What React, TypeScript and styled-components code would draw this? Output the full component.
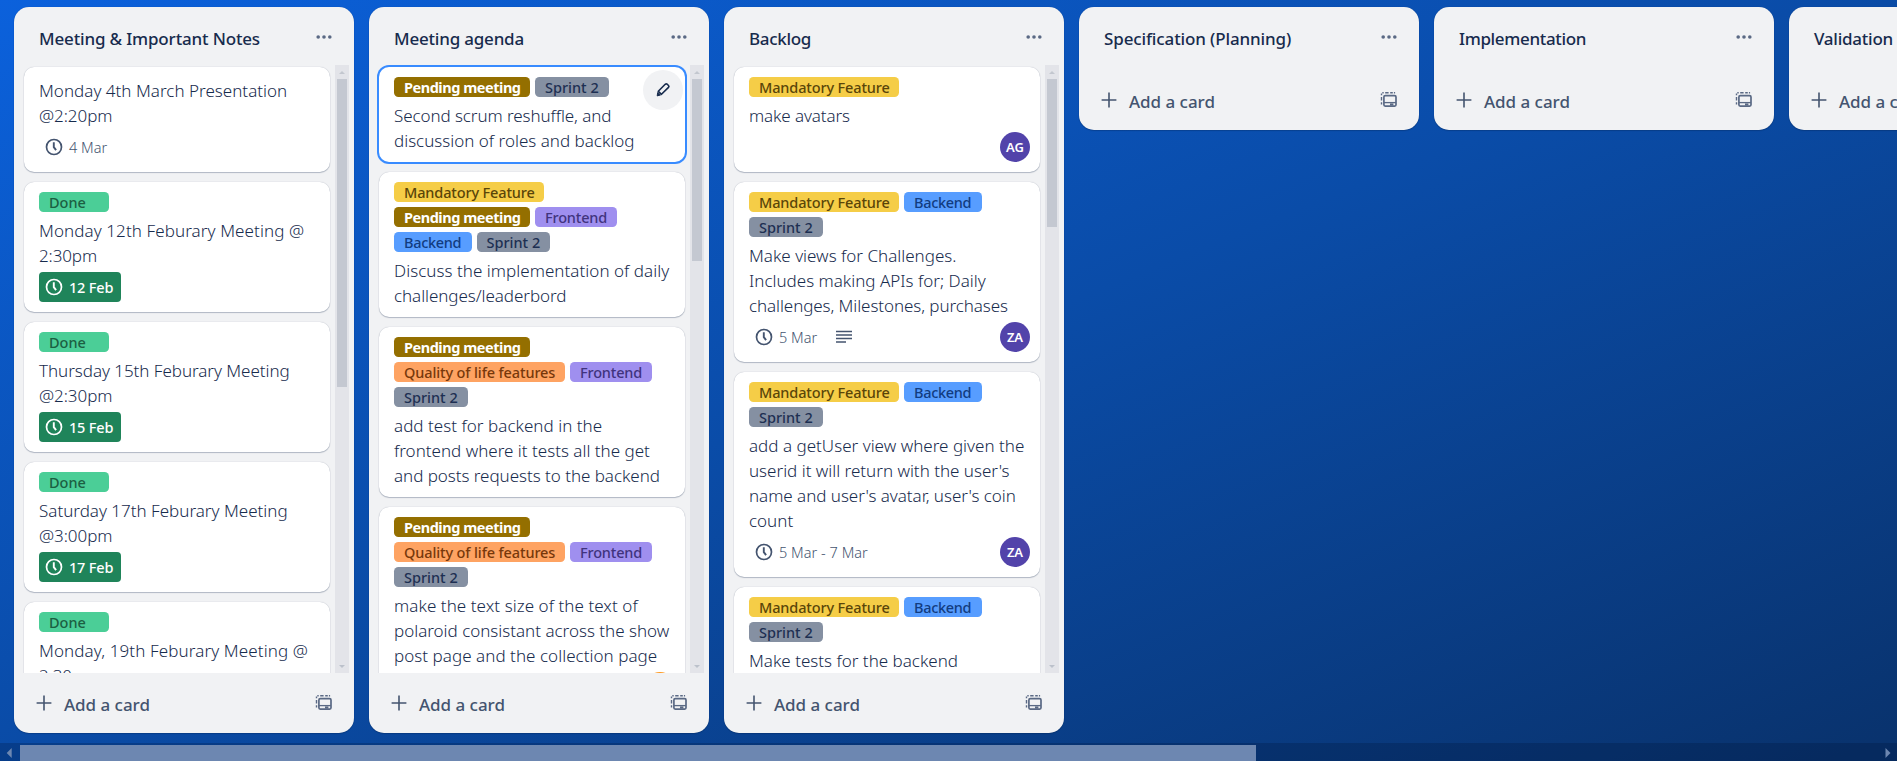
import React from "react";
import styled, { createGlobalStyle, css } from "styled-components";

const GlobalStyle = createGlobalStyle`
  *, *::before, *::after { box-sizing: border-box; }
  body {
    margin: 0;
    overflow: hidden;
    font-family: "Noto Sans", "Open Sans", sans-serif;
    color: #172b4d;
  }
`;

/* ---------- board ---------- */

const Page = styled.div`
  display: flex;
  flex-direction: column;
  height: 761px;
  background: linear-gradient(to bottom right, #0b61dc 0%, #0a4ca8 48%, #09326c 100%);
`;

const Lists = styled.main`
  flex: 1;
  min-height: 0;
  display: flex;
  align-items: flex-start;
  gap: 15px;
  padding: 7px 0 10px 14px;
  overflow: hidden;
`;

const List = styled.section<{ $full: boolean }>`
  flex: 0 0 340px;
  display: flex;
  flex-direction: column;
  height: ${(p) => (p.$full ? "726px" : "123px")};
  border-radius: 15px;
  background: #f1f2f4;
  box-shadow: 0 1px 1px #091e4240, 0 0 1px #091e424f;
`;

const ListHeader = styled.header`
  flex: 0 0 58px;
  display: flex;
  justify-content: space-between;
  padding: 19px 22px 0 25px;
`;

const ListTitle = styled.h2<{ $track: number }>`
  margin: 0;
  font-size: 17px;
  line-height: 25px;
  font-weight: 500;
  letter-spacing: ${(p) => p.$track}px;
  white-space: nowrap;
`;

const HeaderIcon = styled.span`
  height: 20px;
  padding-top: 1px;
  color: #5a6984;
`;

const ListBody = styled.div`
  flex: 1;
  min-height: 0;
  display: flex;
  justify-content: space-between;
  padding: 0 5px 0 8px;
`;

const Cards = styled.div`
  width: 311px;
  height: 100%;
  padding: 2px 3px 0 2px;
  display: flex;
  flex-direction: column;
  gap: 10px;
  overflow: hidden;
`;

const ListFooter = styled.footer<{ $short: boolean }>`
  flex: none;
  display: flex;
  align-items: center;
  height: ${(p) => (p.$short ? 65 : 60)}px;
  padding: ${(p) => (p.$short ? "5px 21px 0 22px" : "0 21px 0 22px")};
  color: #44546f;
`;

const AddLabel = styled.span`
  flex: 1;
  margin-left: 12px;
  padding-top: 2px;
  font-size: 17px;
  line-height: 25px;
  font-weight: 500;
  letter-spacing: -0.03px;
`;

/* ---------- cards ---------- */

const Card = styled.article<{ $focused?: boolean }>`
  position: relative;
  flex: none;
  padding: 10px 10px 5px 15px;
  border-radius: 10px;
  background: #fff;
  box-shadow: 0 1px 1px #091e4240, 0 0 1px #091e424f;
  ${(p) =>
    p.$focused &&
    css`
      box-shadow: 0 0 0 2px #388bff;
    `}
`;

const Labels = styled.div`
  display: flex;
  flex-wrap: wrap;
  gap: 5px;
  padding-bottom: 5px;
`;

type LabelKind = "done" | "pending" | "sprint" | "mandatory" | "frontend" | "backend" | "quality";

const labelSpec: Record<
  LabelKind,
  { text: string; bg: string; fg: string; width: number; track: number; weight: number }
> = {
  done: { text: "Done", bg: "#4bce97", fg: "#1c5f42", width: 70, track: -0.04, weight: 500 },
  pending: { text: "Pending meeting", bg: "#946f00", fg: "#ffffff", width: 136, track: -0.47, weight: 700 },
  sprint: { text: "Sprint 2", bg: "#8590a2", fg: "#1d2f52", width: 73.5, track: 0, weight: 500 },
  mandatory: { text: "Mandatory Feature", bg: "#f5cd47", fg: "#5a4509", width: 150, track: -0.14, weight: 500 },
  frontend: { text: "Frontend", bg: "#9f8fef", fg: "#41337d", width: 82, track: -0.17, weight: 500 },
  backend: { text: "Backend", bg: "#579dff", fg: "#123c80", width: 77.5, track: -0.32, weight: 500 },
  quality: { text: "Quality of life features", bg: "#fea362", fg: "#77380b", width: 171, track: -0.12, weight: 500 },
};

const Label = styled.span<{ $kind: LabelKind }>`
  width: ${(p) => labelSpec[p.$kind].width}px;
  height: 20px;
  padding-left: 10px;
  border-radius: 4.5px;
  background: ${(p) => labelSpec[p.$kind].bg};
  color: ${(p) => labelSpec[p.$kind].fg};
  font-size: 14.5px;
  line-height: 20px;
  font-weight: ${(p) => labelSpec[p.$kind].weight};
  letter-spacing: ${(p) => labelSpec[p.$kind].track}px;
  white-space: nowrap;
`;

const CardTitle = styled.div`
  padding-top: 1px;
  margin-bottom: 4px;
  font-size: 17px;
  line-height: 25px;
  font-weight: 350;
`;

const TitleLine = styled.div<{ $track: number }>`
  white-space: nowrap;
  letter-spacing: ${(p) => p.$track}px;
`;

const CardMeta = styled.div`
  display: flex;
  align-items: center;
  height: 30px;
  margin-bottom: 5px;
`;

const DateBadge = styled.span<{ $done?: boolean }>`
  display: flex;
  align-items: center;
  gap: 5px;
  height: 30px;
  padding: 0 7.5px 0 5px;
  border-radius: 4px;
  font-size: 14.5px;
  line-height: 28px;
  white-space: nowrap;
  font-weight: ${(p) => (p.$done ? 500 : 350)};
  letter-spacing: ${(p) => (p.$done ? -0.17 : 0.02)}px;
  color: ${(p) => (p.$done ? "#ffffff" : "#44546f")};
  background: ${(p) => (p.$done ? "#1f845a" : "transparent")};
`;

const DescriptionBadge = styled.span`
  display: flex;
  margin-left: 11px;
  color: #44546f;
`;

const Avatar = styled.span<{ $color: string }>`
  display: grid;
  place-items: center;
  width: 30px;
  height: 30px;
  margin-left: auto;
  border-radius: 50%;
  background: ${(p) => p.$color};
  color: #fff;
  font-size: 13px;
  line-height: 30px;
  font-weight: 600;
`;

const EditButton = styled.button`
  position: absolute;
  top: 3px;
  right: 2px;
  display: grid;
  place-items: center;
  width: 40px;
  height: 40px;
  padding: 0;
  border: 0;
  border-radius: 50%;
  background: #f1f2f4;
  color: #172b4d;
`;

/* ---------- scrollbars ---------- */

const VTrack = styled.div`
  display: flex;
  flex-direction: column;
  align-items: center;
  width: 14px;
  height: 608px;
  background: #e3e4e9;
`;

const VThumb = styled.div<{ $height: number }>`
  width: 10px;
  height: ${(p) => p.$height}px;
  background: #c4c8d1;
`;

const VArrow = styled.div<{ $end?: boolean }>`
  display: grid;
  place-items: center;
  height: 14px;
  margin-top: ${(p) => (p.$end ? "auto" : "0")};
`;

const HTrack = styled.div`
  flex: 0 0 18px;
  display: flex;
  align-items: center;
  padding: 2px 6px 0;
  background: rgba(2, 18, 50, 0.24);
`;

const HThumb = styled.div`
  width: 1236px;
  height: 16px;
  margin: 0 auto 0 8px;
  background: #6d87b1;
`;

/* ---------- icons ---------- */

const DotsIcon = () => (
  <svg width="16" height="20" viewBox="0 0 16 20" fill="currentColor">
    <circle cx="2.2" cy="10" r="1.8" />
    <circle cx="8" cy="10" r="1.8" />
    <circle cx="13.8" cy="10" r="1.8" />
  </svg>
);

const PlusIcon = () => (
  <svg width="16" height="16" viewBox="0 0 16 16" stroke="currentColor" strokeWidth="1.6" fill="none">
    <path d="M8 .6v14.8M.6 8h14.8" />
  </svg>
);

const TemplateIcon = () => (
  <svg width="18" height="18" viewBox="0 0 18 18" fill="none" stroke="#5a6984" strokeWidth="1.7">
    <rect x="3.9" y="4.7" width="12.1" height="10.4" rx="1.3" />
    <path d="M4 11.6h12" strokeWidth="1.3" />
    <path d="M10 13.5h3.4" strokeWidth="2.2" />
    <path d="M2.3 1.8h1.4M5.2 1.8h3.4M10.2 1.8h2.6M13.9 1.8h1.2" strokeWidth="1.6" />
    <path d="M1.5 2.5v1.8M1.5 6v3.4M1.5 11.2v2.4" strokeWidth="1.4" />
  </svg>
);

const ClockIcon = () => (
  <svg width="20" height="20" viewBox="0 0 20 20" fill="none" stroke="currentColor" strokeWidth="1.7">
    <circle cx="10" cy="10" r="7.5" />
    <path d="M9.8 5.2v5l2.3 3" strokeWidth="1.9" />
  </svg>
);

const DescriptionIcon = () => (
  <svg width="16" height="14" viewBox="0 0 16 14" stroke="currentColor" strokeWidth="1.7">
    <path d="M0 1.5h16M0 5h16M0 8.5h16M0 12h10" />
  </svg>
);

const PencilIcon = () => (
  <svg width="20" height="20" viewBox="0 0 20 20" fill="none" stroke="currentColor" strokeWidth="1.6" strokeLinejoin="round">
    <path d="M5.3 11.3l6.9-7q1-.9 2-.1l1.3 1.3q.9 1 0 1.9l-7 6.9z" />
    <path d="M4.7 12.4l2.7 2.6-3.2.9z" fill="currentColor" strokeWidth="1" />
  </svg>
);

const VerticalArrow = ({ down }: { down?: boolean }) => (
  <svg width="6" height="3" viewBox="0 0 6 3" fill={down ? "#bcc1cb" : "#c3c7cf"}>
    <path d={down ? "M0 0h6L3 3z" : "M0 3h6L3 0z"} />
  </svg>
);

const HorizontalArrow = ({ right }: { right?: boolean }) => (
  <svg width="6" height="10" viewBox="0 0 6 10" fill="#6d87b1">
    <path d={right ? "M.5 0v10L5.5 5z" : "M5.7 0v10L.7 5z"} />
  </svg>
);

/* ---------- data ---------- */

type Line = [text: string, track: number];

interface CardData {
  labels?: LabelKind[];
  lines: Line[];
  date?: string;
  done?: boolean;
  description?: boolean;
  member?: string;
  memberColor?: string;
  focused?: boolean;
}

interface ListData {
  title: string;
  track: number;
  thumb?: number;
  cards?: CardData[];
}

const board: ListData[] = [
  {
    title: "Meeting & Important Notes",
    track: -0.16,
    thumb: 308,
    cards: [
      { lines: [["Monday 4th March Presentation", 0.02], ["@2:20pm", -0.05]], date: "4 Mar" },
      { labels: ["done"], lines: [["Monday 12th Feburary Meeting @", 0.09], ["2:30pm", -0.11]], date: "12 Feb", done: true },
      { labels: ["done"], lines: [["Thursday 15th Feburary Meeting", -0.04], ["@2:30pm", -0.05]], date: "15 Feb", done: true },
      { labels: ["done"], lines: [["Saturday 17th Feburary Meeting", 0], ["@3:00pm", -0.05]], date: "17 Feb", done: true },
      { labels: ["done"], lines: [["Monday, 19th Feburary Meeting @", 0.11], ["2:30", -0.1]] },
    ],
  },
  {
    title: "Meeting agenda",
    track: -0.2,
    thumb: 182,
    cards: [
      {
        labels: ["pending", "sprint"],
        lines: [["Second scrum reshuffle, and", -0.08], ["discussion of roles and backlog", 0]],
        focused: true,
      },
      {
        labels: ["mandatory", "pending", "frontend", "backend", "sprint"],
        lines: [["Discuss the implementation of daily", 0.04], ["challenges/leaderbord", -0.06]],
      },
      {
        labels: ["pending", "quality", "frontend", "sprint"],
        lines: [
          ["add test for backend in the", 0.03],
          ["frontend where it tests all the get", 0],
          ["and posts requests to the backend", -0.04],
        ],
      },
      {
        labels: ["pending", "quality", "frontend", "sprint"],
        lines: [
          ["make the text size of the text of", 0.06],
          ["polaroid consistant across the show", -0.01],
          ["post page and the collection page", 0.04],
        ],
        member: "",
        memberColor: "#ff991f",
      },
    ],
  },
  {
    title: "Backlog",
    track: -0.32,
    thumb: 148,
    cards: [
      { labels: ["mandatory"], lines: [["make avatars", -0.12]], member: "AG" },
      {
        labels: ["mandatory", "backend", "sprint"],
        lines: [
          ["Make views for Challenges.", 0],
          ["Includes making APIs for; Daily", 0],
          ["challenges, Milestones, purchases", -0.08],
        ],
        date: "5 Mar",
        description: true,
        member: "ZA",
      },
      {
        labels: ["mandatory", "backend", "sprint"],
        lines: [
          ["add a getUser view where given the", 0.01],
          ["userid it will return with the user's", -0.01],
          ["name and user's avatar, user's coin", -0.03],
          ["count", 0],
        ],
        date: "5 Mar - 7 Mar",
        member: "ZA",
      },
      {
        labels: ["mandatory", "backend", "sprint"],
        lines: [["Make tests for the backend", 0]],
      },
    ],
  },
  { title: "Specification (Planning)", track: -0.13 },
  { title: "Implementation", track: -0.35 },
  { title: "Validation", track: -0.25 },
];

/* ---------- views ---------- */

const CardView = ({ card }: { card: CardData }) => (
  <Card $focused={card.focused}>
    {card.labels && (
      <Labels>
        {card.labels.map((kind) => (
          <Label key={kind} $kind={kind}>
            {labelSpec[kind].text}
          </Label>
        ))}
      </Labels>
    )}
    <CardTitle>
      {card.lines.map(([text, track]) => (
        <TitleLine key={text} $track={track}>
          {text}
        </TitleLine>
      ))}
    </CardTitle>
    {(card.date || card.member !== undefined) && (
      <CardMeta>
        {card.date && (
          <DateBadge $done={card.done}>
            <ClockIcon />
            {card.date}
          </DateBadge>
        )}
        {card.description && (
          <DescriptionBadge>
            <DescriptionIcon />
          </DescriptionBadge>
        )}
        {card.member !== undefined && <Avatar $color={card.memberColor ?? "#5243aa"}>{card.member}</Avatar>}
      </CardMeta>
    )}
    {card.focused && (
      <EditButton aria-label="Edit card">
        <PencilIcon />
      </EditButton>
    )}
  </Card>
);

const ListView = ({ list }: { list: ListData }) => (
  <List $full={!!list.cards}>
    <ListHeader>
      <ListTitle $track={list.track}>{list.title}</ListTitle>
      <HeaderIcon>
        <DotsIcon />
      </HeaderIcon>
    </ListHeader>
    {list.cards && (
      <ListBody>
        <Cards>
          {list.cards.map((card, i) => (
            <CardView key={i} card={card} />
          ))}
        </Cards>
        <VTrack>
          <VArrow>
            <VerticalArrow />
          </VArrow>
          <VThumb $height={list.thumb ?? 0} />
          <VArrow $end>
            <VerticalArrow down />
          </VArrow>
        </VTrack>
      </ListBody>
    )}
    <ListFooter $short={!list.cards}>
      <PlusIcon />
      <AddLabel>Add a card</AddLabel>
      <TemplateIcon />
    </ListFooter>
  </List>
);

export default function App() {
  return (
    <>
      <GlobalStyle />
      <Page>
        <Lists>
          {board.map((list) => (
            <ListView key={list.title} list={list} />
          ))}
        </Lists>
        <HTrack>
          <HorizontalArrow />
          <HThumb />
          <HorizontalArrow right />
        </HTrack>
      </Page>
    </>
  );
}
